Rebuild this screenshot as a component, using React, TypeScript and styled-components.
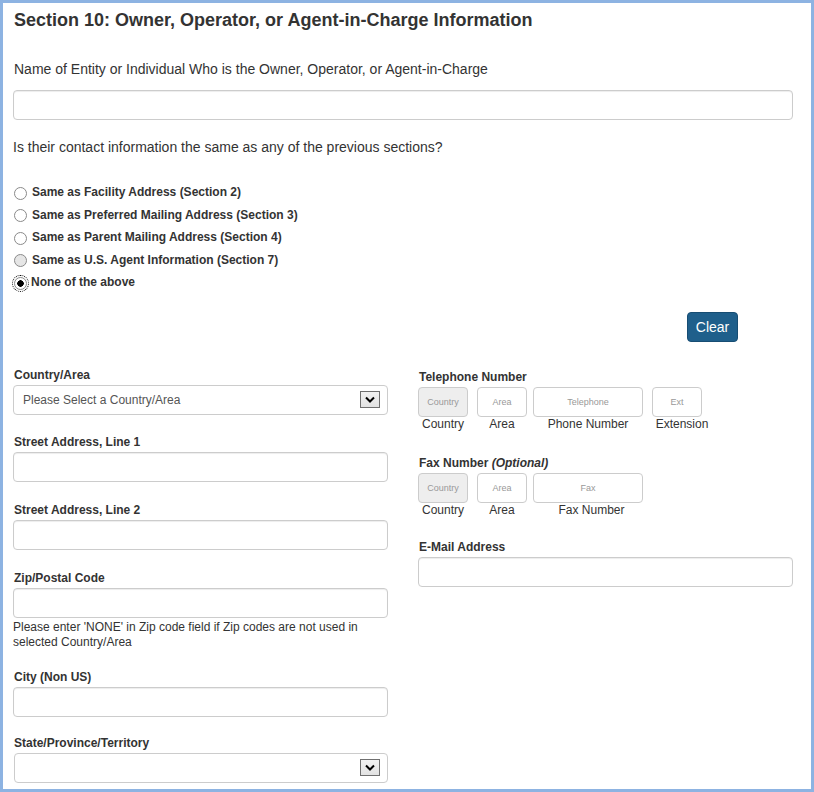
import React from 'react';
import styled, { createGlobalStyle } from 'styled-components';

const GlobalStyle = createGlobalStyle`
  html, body {
    margin: 0;
    padding: 0;
    background: #fff;
  }
  body {
    font-family: "Liberation Sans", Arial, sans-serif;
    color: #333;
  }
`;

const Frame = styled.div`
  box-sizing: border-box;
  width: 814px;
  height: 792px;
  border: 3px solid #8db3e2;
  padding: 7px 18px 0 10px;
  overflow: hidden;
  background: #fff;
`;

const Title = styled.h1`
  margin: 0 0 0 1px;
  font-size: 18px;
  line-height: 20px;
  font-weight: bold;
  color: #333;
`;

const Prompt = styled.p<{ $top: number; $bottom: number; $indent?: number }>`
  margin: ${(p) => p.$top}px 0 ${(p) => p.$bottom}px ${(p) => p.$indent || 0}px;
  font-size: 14px;
  line-height: 20px;
  color: #333;
`;

const TextInput = styled.input`
  display: block;
  box-sizing: border-box;
  width: 100%;
  height: 30px;
  margin: 0;
  padding: 0 10px;
  border: 1px solid #ccc;
  border-radius: 4px;
  box-shadow: inset 0 1px 1px rgba(0, 0, 0, 0.075);
  background: #fff;
  font-family: inherit;
  font-size: 12px;
  outline: none;
`;

const RadioList = styled.div`
  margin-top: 24px;
`;

const RadioRow = styled.label`
  display: flex;
  align-items: center;
  height: 22.5px;
  font-size: 12px;
  font-weight: bold;
  color: #333;
`;

const RadioDot = styled.input<{ $shaded?: boolean }>`
  appearance: none;
  box-sizing: border-box;
  width: 13px;
  height: 13px;
  margin: 2px 5px 0 1px;
  border: 1px solid #8a8a8a;
  border-radius: 50%;
  background: ${(p) => (p.$shaded ? '#e6e6e6' : '#fff')};
  flex-shrink: 0;

  &:checked {
    background: radial-gradient(circle, #000 0 3px, #fff 3.5px);
    outline: 1px dotted #000;
    outline-offset: 1px;
  }
`;

const CheckedText = styled.span`
  margin-left: -1px;
`;

const ButtonRow = styled.div`
  display: flex;
  justify-content: flex-end;
  margin-top: 18px;
  padding-right: 55px;
`;

const ClearButton = styled.button`
  box-sizing: border-box;
  width: 51px;
  height: 30px;
  padding: 0;
  border: 1px solid #174d73;
  border-radius: 4px;
  background: #1f5f8b;
  color: #fff;
  font-family: inherit;
  font-size: 14px;
`;

const Columns = styled.div`
  display: grid;
  grid-template-columns: 375px 375px;
  column-gap: 30px;
  margin-top: 25px;
`;

const Column = styled.div<{ $offset?: number }>`
  padding-top: ${(p) => p.$offset || 0}px;
`;

const Field = styled.div<{ $gap?: number }>`
  margin-bottom: ${(p) => (p.$gap === undefined ? 19 : p.$gap)}px;
`;

const FieldLabel = styled.div`
  margin: 0 0 2px 1px;
  padding-top: 1px;
  font-size: 12px;
  line-height: 15px;
  font-weight: bold;
  color: #333;

  em {
    font-style: italic;
  }
`;

const SelectBox = styled.div<{ $shift?: number }>`
  box-sizing: border-box;
  display: flex;
  align-items: center;
  height: 30px;
  margin-left: ${(p) => p.$shift || 0}px;
  padding: 0 7px 0 9px;
  border: 1px solid #ccc;
  border-radius: 4px;
  background: #fff;
  font-size: 12px;
  color: #555;
`;

const SelectText = styled.span`
  flex: 1;
`;

const ArrowBox = styled.span`
  box-sizing: border-box;
  display: flex;
  align-items: center;
  justify-content: center;
  width: 20px;
  height: 17px;
  border: 1px solid #6f6f6f;
  background: linear-gradient(#f2f2f2, #e2e2e2);
`;

const HelpText = styled.div`
  margin: 2px 0 5px;
  font-size: 12px;
  line-height: 15px;
  color: #333;
`;

const PhoneRow = styled.div`
  display: flex;
  align-items: flex-start;
`;

const PhonePart = styled.div<{ $width: number; $gap: number }>`
  display: flex;
  flex-direction: column;
  align-items: center;
  width: ${(p) => p.$width}px;
  margin-left: ${(p) => p.$gap}px;
`;

const PhoneInput = styled.input<{ $muted?: boolean }>`
  box-sizing: border-box;
  width: 100%;
  height: 30px;
  margin: 0;
  padding: 0;
  border: 1px solid #ccc;
  border-radius: 4px;
  background: ${(p) => (p.$muted ? '#eee' : '#fff')};
  font-family: inherit;
  font-size: 9px;
  text-align: center;
  outline: none;

  &::placeholder {
    color: #999;
  }
`;

const PartLabel = styled.div<{ $nudge?: number }>`
  margin-left: ${(p) => p.$nudge || 0}px;
  font-size: 12px;
  line-height: 15px;
  white-space: nowrap;
  color: #333;
`;

const Chevron = () => (
  <svg width="10" height="7" viewBox="0 0 10 7">
    <path d="M1 1.5 L5 5.5 L9 1.5" fill="none" stroke="#000" strokeWidth="2" />
  </svg>
);

type Part = { placeholder: string; label: string; width: number; gap: number; muted?: boolean; nudge?: number };

const phoneParts: Part[] = [
  { placeholder: 'Country', label: 'Country', width: 50, gap: 0, muted: true },
  { placeholder: 'Area', label: 'Area', width: 50, gap: 9 },
  { placeholder: 'Telephone', label: 'Phone Number', width: 110, gap: 6 },
  { placeholder: 'Ext', label: 'Extension', width: 50, gap: 9, nudge: 10 },
];

const faxParts: Part[] = [
  { placeholder: 'Country', label: 'Country', width: 50, gap: 0, muted: true },
  { placeholder: 'Area', label: 'Area', width: 50, gap: 9 },
  { placeholder: 'Fax', label: 'Fax Number', width: 110, gap: 6, nudge: 7 },
];

const radioOptions = [
  'Same as Facility Address (Section 2)',
  'Same as Preferred Mailing Address (Section 3)',
  'Same as Parent Mailing Address (Section 4)',
  'Same as U.S. Agent Information (Section 7)',
];

const PhoneFields = ({ parts }: { parts: Part[] }) => (
  <PhoneRow>
    {parts.map((part) => (
      <PhonePart key={part.placeholder} $width={part.width} $gap={part.gap}>
        <PhoneInput placeholder={part.placeholder} readOnly={part.muted} $muted={part.muted} />
        <PartLabel $nudge={part.nudge}>{part.label}</PartLabel>
      </PhonePart>
    ))}
  </PhoneRow>
);

export default function App() {
  return (
    <>
      <GlobalStyle />
      <Frame>
        <Title>Section 10: Owner, Operator, or Agent-in-Charge Information</Title>
        <Prompt $top={29} $bottom={11} $indent={1}>
          Name of Entity or Individual Who is the Owner, Operator, or Agent-in-Charge
        </Prompt>
        <TextInput />
        <Prompt $top={17} $bottom={0}>
          Is their contact information the same as any of the previous sections?
        </Prompt>

        <RadioList>
          {radioOptions.map((option, i) => (
            <RadioRow key={option}>
              <RadioDot type="radio" name="contact" $shaded={i === 3} />
              <span>{option}</span>
            </RadioRow>
          ))}
          <RadioRow>
            <RadioDot type="radio" name="contact" defaultChecked />
            <CheckedText>None of the above</CheckedText>
          </RadioRow>
        </RadioList>

        <ButtonRow>
          <ClearButton>Clear</ClearButton>
        </ButtonRow>

        <Columns>
          <Column>
            <Field>
              <FieldLabel>Country/Area</FieldLabel>
              <SelectBox>
                <SelectText>Please Select a Country/Area</SelectText>
                <ArrowBox>
                  <Chevron />
                </ArrowBox>
              </SelectBox>
            </Field>
            <Field $gap={20}>
              <FieldLabel>Street Address, Line 1</FieldLabel>
              <TextInput />
            </Field>
            <Field $gap={20}>
              <FieldLabel>Street Address, Line 2</FieldLabel>
              <TextInput />
            </Field>
            <Field>
              <FieldLabel>Zip/Postal Code</FieldLabel>
              <TextInput />
              <HelpText>
                Please enter 'NONE' in Zip code field if Zip codes are not used in selected Country/Area
              </HelpText>
            </Field>
            <Field $gap={18}>
              <FieldLabel>City (Non US)</FieldLabel>
              <TextInput />
            </Field>
            <Field>
              <FieldLabel>State/Province/Territory</FieldLabel>
              <SelectBox $shift={1}>
                <SelectText />
                <ArrowBox>
                  <Chevron />
                </ArrowBox>
              </SelectBox>
            </Field>
          </Column>

          <Column $offset={2}>
            <Field $gap={23}>
              <FieldLabel>Telephone Number</FieldLabel>
              <PhoneFields parts={phoneParts} />
            </Field>
            <Field $gap={21}>
              <FieldLabel>
                Fax Number <em>(Optional)</em>
              </FieldLabel>
              <PhoneFields parts={faxParts} />
            </Field>
            <Field>
              <FieldLabel>E-Mail Address</FieldLabel>
              <TextInput />
            </Field>
          </Column>
        </Columns>
      </Frame>
    </>
  );
}
